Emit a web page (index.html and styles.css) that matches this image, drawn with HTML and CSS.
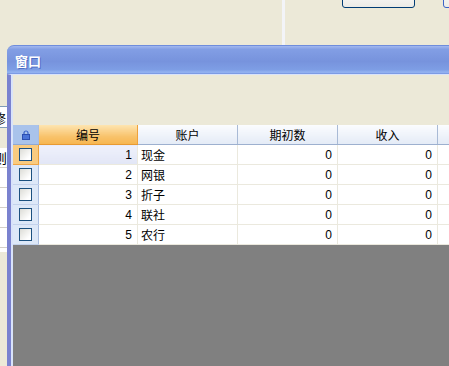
FILE: index.html
```html
<!DOCTYPE html>
<html lang="zh-CN">
<head>
    <meta charset="UTF-8">
    <title>窗口</title>
    <link rel="stylesheet" href="styles.css">
</head>
<body>
    <!-- 后面的主窗体，只露出一点 -->
    <div class="backdrop">
        <div class="splitter"></div>
        <div class="btn btn-a">确定</div>
        <div class="btn btn-b"></div>
        <div class="side-label">修</div>
        <div class="side-list">
            <div class="side-row">则</div>
            <div class="side-row"></div>
            <div class="side-row"></div>
            <div class="side-row"></div>
            <div class="side-row"></div>
        </div>
    </div>

    <div class="window">
        <div class="titlebar">窗口</div>
        <div class="frame">
            <div class="toolbar"></div>
            <table class="grid">
                <thead>
                    <tr>
                        <th class="ind lock">
                            <svg width="8" height="10" viewBox="0 0 8 10">
                                <path d="M2 4.5V3a2 2 0 0 1 4 0v1.5" fill="none" stroke="#3a63c8" stroke-width="1.2"/>
                                <rect x="0.5" y="4.5" width="7" height="5" fill="#4a74d8" stroke="#2c4fb0" stroke-width="1"/>
                            </svg>
                        </th>
                        <th class="sel">编号</th>
                        <th>账户</th>
                        <th>期初数</th>
                        <th>收入</th>
                        <th></th>
                    </tr>
                </thead>
                <tbody>
                    <tr class="cur">
                        <td class="ind"><span class="chk"></span></td>
                        <td class="num focus">1</td><td>现金</td><td class="num">0</td><td class="num">0</td><td></td>
                    </tr>
                    <tr>
                        <td class="ind"><span class="chk"></span></td>
                        <td class="num">2</td><td>网银</td><td class="num">0</td><td class="num">0</td><td></td>
                    </tr>
                    <tr>
                        <td class="ind"><span class="chk"></span></td>
                        <td class="num">3</td><td>折子</td><td class="num">0</td><td class="num">0</td><td></td>
                    </tr>
                    <tr>
                        <td class="ind"><span class="chk"></span></td>
                        <td class="num">4</td><td>联社</td><td class="num">0</td><td class="num">0</td><td></td>
                    </tr>
                    <tr>
                        <td class="ind"><span class="chk"></span></td>
                        <td class="num">5</td><td>农行</td><td class="num">0</td><td class="num">0</td><td></td>
                    </tr>
                </tbody>
            </table>
            <div class="empty"></div>
        </div>
    </div>
</body>
</html>
```
FILE: styles.css
```css
/* XP 风格的子窗体 */
html, body { margin: 0; height: 100%; overflow: hidden; }
body { background-color: #ece9d8; font-family: "Noto Sans CJK SC", sans-serif; font-size: 12px; position: relative; }

.backdrop { position: absolute; inset: 0; }
.splitter { position: absolute; left: 282px; top: 0; width: 3px; height: 46px; background-color: #f3f4f8; }
.btn { position: absolute; top: -14px; height: 20px; border: 1px solid #003c74; border-radius: 3px; background: linear-gradient(#ffffff, #ecebe6); font-size: 12px; line-height: 8px; text-align: center; color: #000; }
.btn-a { left: 342px; width: 71px; }
.btn-b { left: 443px; width: 40px; border-color: #3c64c8; }
.side-label { position: absolute; left: -8px; top: 106px; width: 14px; height: 20px; background-color: #fff; border: 1px solid #7f9db9; line-height: 22px; font-size: 13px; }
.side-list { position: absolute; left: -30px; top: 148px; width: 37px; height: 104px; background-color: #fff; }
.side-row { height: 19px; border-bottom: 1px solid #d4d0c8; line-height: 19px; font-size: 13px; text-align: right; }

.window { position: absolute; left: 7px; top: 45px; right: -20px; bottom: -20px; display: flex; flex-direction: column; }
.titlebar { height: 29px; border-radius: 7px 7px 0 0; border-top: 1px solid #6f8ddc; box-sizing: border-box;
    background: linear-gradient(#a2b8ef 0, #829ee4 12%, #7793dd 55%, #7e9ee5 85%, #95b4f2 94%, #7290de 100%);
    color: #fff; font-weight: bold; font-size: 13px; line-height: 29px; padding-left: 8px; text-shadow: 1px 1px 0 #4d6cc4; }
.frame { flex: 1; display: flex; flex-direction: column; border-left: 4px solid #7a82cf; box-shadow: inset 2px 0 0 #d9e3fa; padding-left: 2px; border-top: 1px solid #d9e3fa; }
.toolbar { height: 50px; background-color: #ece9d8; }
.empty { flex: 1; background-color: #808080; }

.grid { border-collapse: collapse; table-layout: fixed; width: 525px; background-color: #fff; }
.grid th, .grid td { height: 19px; padding: 0 3px; border-right: 1px solid #ebe9de; border-bottom: 1px solid #ebe9de; white-space: nowrap; overflow: hidden; }
.grid th { font-weight: normal; text-align: center; border-right-color: #a9bad5; border-bottom: 1px solid #9db0cf;
    background: linear-gradient(#fbfcfe, #e4ebf6); }
.grid th:nth-child(2) { width: 92px; }
.grid th:nth-child(n+3) { width: 93px; }
.grid th.ind { width: 25px; }
.grid .ind { padding: 0; text-align: center; background: #dde8f8; border-right: 1px solid #a9bde0; border-bottom-color: #c3d2ec; }
.grid th.lock { background: #a9c3eb; border-bottom-color: #8ea8d4; }
.grid th.lock svg { display: block; margin: 1px auto 0; }
.grid th.sel { background: linear-gradient(#fde4b0, #f8c36c 60%, #f7b650); border-right-color: #eea23c; border-bottom-color: #e89a32; }
.grid tr.cur .ind { background: #f9cb80; border-bottom-color: #f0a646; border-right-color: #eea23c; }
.grid td.focus { background: linear-gradient(#eff1fb, #e2e6f6); }
.grid td.num { text-align: right; padding-right: 5px; font-family: "Liberation Sans", sans-serif; }
.chk { display: block; width: 11px; height: 11px; margin: 0 auto; border: 1px solid #1c5180; background: linear-gradient(135deg, #dcdcd6, #ffffff 80%); }
```
